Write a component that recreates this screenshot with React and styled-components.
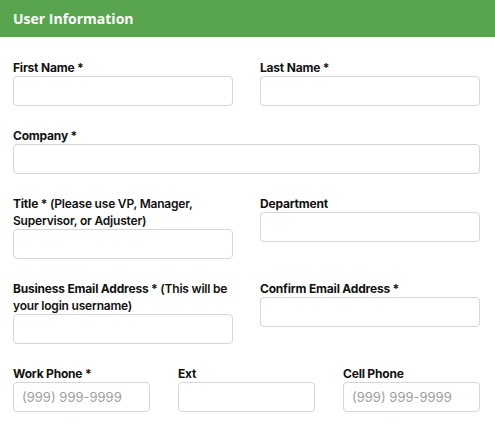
import React from 'react';
import styled, { createGlobalStyle } from 'styled-components';

const Global = createGlobalStyle`
  body {
    margin: 0;
    background: #fff;
    font-family: Inter, "Liberation Sans", sans-serif;
  }
`;

export default function App() {
    return (
        <>
            <Global />
            <Header>User Information</Header>
            <Form>
                <Row cols={2}>
                    <Field>
                        <Label>First Name *</Label>
                        <Input />
                    </Field>
                    <Field>
                        <Label>Last Name *</Label>
                        <Input />
                    </Field>
                </Row>
                <Row cols={1}>
                    <Field>
                        <Label>Company *</Label>
                        <Input />
                    </Field>
                </Row>
                <Row cols={2}>
                    <Field>
                        <Label>Title * <Note>(Please use VP, Manager, Supervisor, or Adjuster)</Note></Label>
                        <Input />
                    </Field>
                    <Field>
                        <Label>Department</Label>
                        <Input />
                    </Field>
                </Row>
                <Row cols={2}>
                    <Field>
                        <Label>Business Email Address * <Note>(This will be your login username)</Note></Label>
                        <Input />
                    </Field>
                    <Field>
                        <Label>Confirm Email Address *</Label>
                        <Input />
                    </Field>
                </Row>
                <Row cols={3}>
                    <Field>
                        <Label>Work Phone *</Label>
                        <Input placeholder="(999) 999-9999" />
                    </Field>
                    <Field>
                        <Label>Ext</Label>
                        <Input />
                    </Field>
                    <Field>
                        <Label>Cell Phone</Label>
                        <Input placeholder="(999) 999-9999" />
                    </Field>
                </Row>
            </Form>
        </>
    );
}

const Header = styled.div`
    height: 37px;
    background: #58a44f;
    color: #fff;
    font-family: "Open Sans", sans-serif;
    font-size: 14px;
    font-weight: 700;
    line-height: 37px;
    padding: 0 13px;
`;
const Form = styled.div`
    padding: 22px 15px 20px 13px;
`;
const Row = styled.div`
    display: grid;
    grid-template-columns: repeat(${p => p.cols}, 1fr);
    column-gap: ${p => (p.cols === 3 ? 28 : 27)}px;
    align-items: start;
    margin-bottom: 21px;
`;
const Field = styled.div`
    display: flex;
    flex-direction: column;
`;
const Label = styled.label`
    font-size: 12px;
    font-weight: 700;
    line-height: 17px;
    color: #111;
    letter-spacing: -0.2px;
`;
const Note = styled.span`
    font-weight: 600;
`;
const Input = styled.input`
    box-sizing: border-box;
    height: 30px;
    width: 100%;
    border: 1px solid #d6d6d6;
    border-radius: 4px;
    padding: 0 8px;
    font-family: Inter, "Liberation Sans", sans-serif;
    font-size: 13px;
    color: #333;
    outline: none;
    &::placeholder {
        color: #a0a0a0;
    }
`;
